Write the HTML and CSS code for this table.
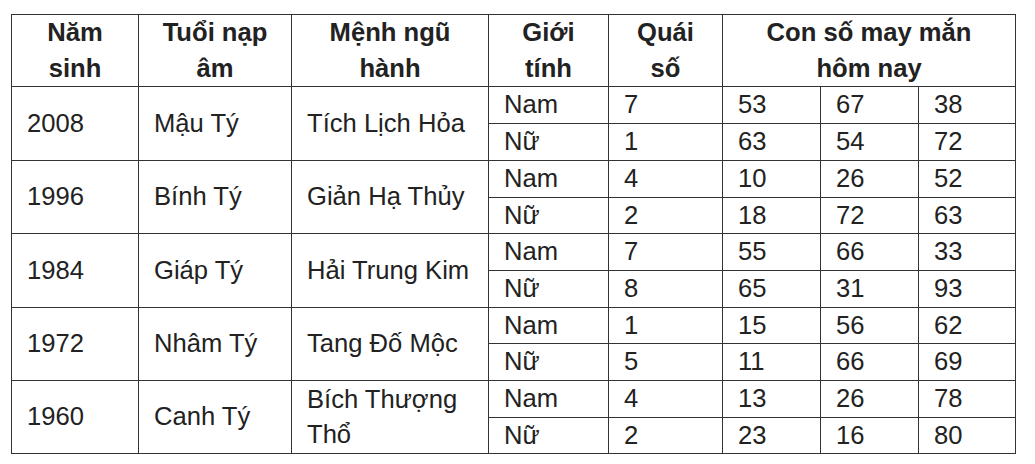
FILE: index.html
```html
<!DOCTYPE html>
<html lang="vi">
<head>
<meta charset="utf-8">
<title>Con số may mắn</title>
<link rel="stylesheet" href="styles.css">
</head>
<body>
<table class="luck">
  <colgroup>
    <col class="c-year"><col class="c-tuoi"><col class="c-menh"><col class="c-sex"><col class="c-quai"><col class="c-n"><col class="c-n"><col class="c-n3">
  </colgroup>
  <thead>
    <tr>
      <th>Năm sinh</th>
      <th>Tuổi nạp âm</th>
      <th>Mệnh ngũ hành</th>
      <th>Giới tính</th>
      <th>Quái số</th>
      <th colspan="3">Con số may mắn hôm nay</th>
    </tr>
  </thead>
  <tbody>
    <tr><td rowspan="2">2008</td><td rowspan="2">Mậu Tý</td><td rowspan="2">Tích Lịch Hỏa</td><td>Nam</td><td>7</td><td>53</td><td>67</td><td>38</td></tr>
    <tr><td>Nữ</td><td>1</td><td>63</td><td>54</td><td>72</td></tr>
    <tr><td rowspan="2">1996</td><td rowspan="2">Bính Tý</td><td rowspan="2">Giản Hạ Thủy</td><td>Nam</td><td>4</td><td>10</td><td>26</td><td>52</td></tr>
    <tr><td>Nữ</td><td>2</td><td>18</td><td>72</td><td>63</td></tr>
    <tr><td rowspan="2">1984</td><td rowspan="2">Giáp Tý</td><td rowspan="2">Hải Trung Kim</td><td>Nam</td><td>7</td><td>55</td><td>66</td><td>33</td></tr>
    <tr><td>Nữ</td><td>8</td><td>65</td><td>31</td><td>93</td></tr>
    <tr><td rowspan="2">1972</td><td rowspan="2">Nhâm Tý</td><td rowspan="2">Tang Đố Mộc</td><td>Nam</td><td>1</td><td>15</td><td>56</td><td>62</td></tr>
    <tr><td>Nữ</td><td>5</td><td>11</td><td>66</td><td>69</td></tr>
    <tr><td rowspan="2">1960</td><td rowspan="2">Canh Tý</td><td rowspan="2">Bích Thượng Thổ</td><td>Nam</td><td>4</td><td>13</td><td>26</td><td>78</td></tr>
    <tr><td>Nữ</td><td>2</td><td>23</td><td>16</td><td>80</td></tr>
  </tbody>
</table>
</body>
</html>
```
FILE: styles.css
```css
html, body {
  margin: 0;
  background: #ffffff;
}
body {
  padding: 14px 0 0 11px;
  font-family: "Liberation Sans", Arial, sans-serif;
  font-size: 25.6px;
  line-height: 1.395;
  color: #222222;
}
.luck {
  border-collapse: collapse;
  table-layout: fixed;
  width: 1004px;
}
.c-year { width: 127px; }
.c-tuoi { width: 153px; }
.c-menh { width: 197px; }
.c-sex { width: 120px; }
.c-quai { width: 114px; }
.c-n { width: 98px; }
.c-n3 { width: 97px; }
.luck th,
.luck td {
  border: 1px solid #333333;
  padding: 0 15px;
  vertical-align: middle;
}
.luck th {
  font-weight: bold;
  text-align: center;
}
.luck td {
  text-align: left;
}
```
